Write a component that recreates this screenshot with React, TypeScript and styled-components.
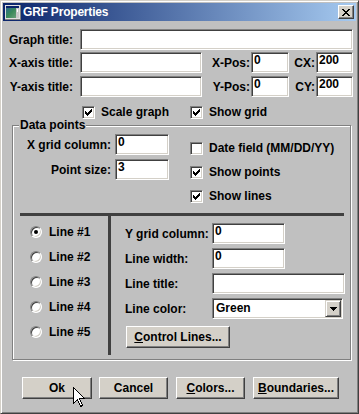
import React from 'react';
import styled, { createGlobalStyle } from 'styled-components';

const Global = createGlobalStyle`
  html, body { margin: 0; padding: 0; background: #c0c0c0; }
  body {
    font-family: "Liberation Sans", Arial, sans-serif;
    font-size: 12px;
    font-weight: bold;
    color: #000;
  }
`;

const Window = styled.div`
  position: relative;
  box-sizing: border-box;
  width: 359px;
  height: 414px;
  background: #c0c0c0;
  border: 1px solid;
  border-color: #d4d0c8 #404040 #404040 #d4d0c8;
  box-shadow: inset 1px 1px 0 #fff, inset -1px -1px 0 #808080;
  padding: 2px;
  display: flex;
  flex-direction: column;
`;

const TitleBar = styled.div`
  height: 18px;
  flex: none;
  display: flex;
  align-items: center;
  padding: 0 2px;
  background: linear-gradient(to right, #0a246a, #a6caf0);
`;

const TitleText = styled.span`
  margin-left: 2px;
  flex: 1;
  color: #fff;
  font-size: 12px;
  font-weight: bold;
  letter-spacing: -0.2px;
`;

const CloseButton = styled.div`
  box-sizing: border-box;
  width: 16px;
  height: 14px;
  background: #d4d0c8;
  border: 1px solid;
  border-color: #fff #404040 #404040 #fff;
  box-shadow: inset -1px -1px 0 #808080;
  display: flex;
  align-items: center;
  justify-content: center;
`;

const Body = styled.div`
  display: flex;
  flex-direction: column;
  padding-top: 8px;
`;

const Row = styled.div<{ $mt?: number }>`
  display: flex;
  align-items: center;
  height: 21px;
  margin-top: ${(p) => p.$mt ?? 0}px;
`;

const Label = styled.span<{ $w: number; $gap?: number; $align?: string }>`
  width: ${(p) => p.$w}px;
  flex: none;
  text-align: ${(p) => p.$align ?? 'right'};
  margin-right: ${(p) => p.$gap ?? 0}px;
  white-space: nowrap;
`;

const Field = styled.div<{ $w: number }>`
  box-sizing: border-box;
  width: ${(p) => p.$w}px;
  height: 21px;
  flex: none;
  background: #fff;
  border: 1px solid;
  border-color: #808080 #fff #fff #808080;
  box-shadow: inset 1px 1px 0 #404040, inset -1px -1px 0 #d4d0c8;
  padding: 1px 2px 0 2px;
  line-height: 13px;
  white-space: nowrap;
  overflow: hidden;
`;

const CheckRow = styled.div`
  display: grid;
  grid-template-columns: 108px auto;
  padding-left: 79px;
  margin-top: 8px;
  height: 13px;
`;

const CheckItem = styled.label<{ $h?: number }>`
  display: flex;
  align-items: center;
  gap: 6px;
  height: ${(p) => (p.$h ? `${p.$h}px` : 'auto')};
  white-space: nowrap;
`;

const Box = styled.span`
  box-sizing: border-box;
  width: 13px;
  height: 13px;
  flex: none;
  background: #fff;
  border: 1px solid;
  border-color: #808080 #fff #fff #808080;
  box-shadow: inset 1px 1px 0 #404040, inset -1px -1px 0 #d4d0c8;
  display: flex;
  align-items: center;
  justify-content: center;
`;

const Group = styled.fieldset`
  box-sizing: border-box;
  width: 339px;
  margin: 1px 0 0 9px;
  padding: 0 0 4px 0;
  min-width: 0;
  border: 1px solid #808080;
  box-shadow: inset 1px 1px 0 #fff, 1px 1px 0 #fff;
`;

const Legend = styled.legend`
  margin-left: 6px;
  padding: 0 1px;
  line-height: 13px;
  background: #c0c0c0;
`;

const TopSection = styled.div`
  display: flex;
  height: 76px;
`;

const LeftCol = styled.div`
  display: flex;
  flex-direction: column;
  gap: 4px;
  padding-top: 2px;
`;

const RightCol = styled.div`
  display: flex;
  flex-direction: column;
  margin-left: 21px;
  padding-top: 4px;
`;

const HRule = styled.div`
  height: 3px;
  background: #404040;
  margin: 5px 6px 0 7px;
`;

const BottomSection = styled.div`
  display: flex;
  height: 139px;
`;

const RadioCol = styled.div`
  width: 95px;
  box-sizing: border-box;
  padding: 4px 0 0 17px;
  display: flex;
  flex-direction: column;
`;

const RadioItem = styled.label`
  display: flex;
  align-items: center;
  gap: 7px;
  height: 24.8px;
`;

const RadioDot = styled.span<{ $on?: boolean }>`
  box-sizing: border-box;
  width: 12px;
  height: 12px;
  border-radius: 50%;
  background: #fff;
  border: 1px solid;
  border-color: #808080 #fff #fff #808080;
  box-shadow: inset 1px 1px 0 #404040, inset -1px -1px 0 #d4d0c8;
  display: flex;
  align-items: center;
  justify-content: center;
  &::after {
    content: '';
    width: 4px;
    height: 4px;
    border-radius: 50%;
    background: ${(p) => (p.$on ? '#000' : 'transparent')};
  }
`;

const VRule = styled.div`
  width: 3px;
  background: #404040;
  flex: none;
`;

const LineCol = styled.div`
  display: flex;
  flex-direction: column;
  gap: 4px;
  padding: 7px 0 0 14px;
`;

const Select = styled(Field)`
  display: flex;
  align-items: stretch;
  padding: 0 0 0 3px;
  line-height: 17px;
`;

const SelectText = styled.span`
  flex: 1;
  padding-top: 1px;
`;

const DropButton = styled.span`
  box-sizing: border-box;
  width: 16px;
  height: 17px;
  margin: 1px 1px 0 0;
  background: #d4d0c8;
  border: 1px solid;
  border-color: #d4d0c8 #404040 #404040 #d4d0c8;
  box-shadow: inset 1px 1px 0 #fff, inset -1px -1px 0 #808080;
  display: flex;
  align-items: center;
  justify-content: center;
`;

const Button = styled.button<{ $w: number }>`
  box-sizing: border-box;
  width: ${(p) => p.$w}px;
  height: 22px;
  flex: none;
  padding: 0;
  font: inherit;
  color: #000;
  background: #d4d0c8;
  border: 1px solid;
  border-color: #fff #404040 #404040 #fff;
  box-shadow: inset -1px -1px 0 #808080;
`;

const ControlButton = styled(Button)`
  margin: 3px 0 0 1px;
`;

const ButtonRow = styled.div`
  display: flex;
  gap: 7px;
  margin: 17px 0 0 19px;
  & > button + button + button { margin-left: 1px; }
`;

const Cursor = styled.svg`
  position: absolute;
  left: 72px;
  top: 386px;
`;

const Check = () => (
  <svg width="7" height="7" viewBox="0 0 7 7" shapeRendering="crispEdges">
    <path
      fill="#000"
      d="M6 0h1v1h-1z M5 1h2v1h-2z M0 2h1v1h-1z M4 2h3v1h-3z M0 3h2v1h-2z M3 3h3v1h-3z M0 4h5v1h-5z M1 5h3v1h-3z M2 6h1v1h-1z"
    />
  </svg>
);

const CheckBox = ({ on, label, h }: { on?: boolean; label: string; h?: number }) => (
  <CheckItem $h={h}>
    <Box>{on && <Check />}</Box>
    {label}
  </CheckItem>
);

const Radio = ({ on, label }: { on?: boolean; label: string }) => (
  <RadioItem>
    <RadioDot $on={on} />
    {label}
  </RadioItem>
);

const AppIcon = () => (
  <svg width="16" height="15" viewBox="0 0 16 15" shapeRendering="crispEdges">
    <defs>
      <linearGradient id="ig" x1="0" y1="0" x2="1" y2="1">
        <stop offset="0" stopColor="#2a6a8a" />
        <stop offset="0.5" stopColor="#3a8a5a" />
        <stop offset="1" stopColor="#6aa07a" />
      </linearGradient>
    </defs>
    <rect x="0" y="0" width="16" height="15" fill="#808080" />
    <rect x="0" y="0" width="15" height="14" fill="#e0e0e0" />
    <rect x="1" y="1" width="13" height="2" fill="#0a246a" />
    <rect x="1" y="3" width="10" height="10" fill="url(#ig)" />
    <rect x="11" y="3" width="3" height="10" fill="#c8c8c8" />
    <rect x="12" y="4" width="1" height="3" fill="#fff" />
  </svg>
);

export default function App() {
  return (
    <>
      <Global />
      <Window>
        <TitleBar>
          <AppIcon />
          <TitleText>GRF Properties</TitleText>
          <CloseButton>
            <svg width="8" height="7" viewBox="0 0 8 7" shapeRendering="crispEdges">
              <path
                fill="#000"
                d="M0 0h2v1h-2z M6 0h2v1h-2z M1 1h2v1h-2z M5 1h2v1h-2z M2 2h4v1h-4z M3 3h2v1h-2z M2 4h4v1h-4z M1 5h2v1h-2z M5 5h2v1h-2z M0 6h2v1h-2z M6 6h2v1h-2z"
              />
            </svg>
          </CloseButton>
        </TitleBar>
        <Body>
          <Row>
            <Label $w={70} $gap={7}>Graph title:</Label>
            <Field $w={273} />
          </Row>
          <Row $mt={2}>
            <Label $w={70} $gap={7}>X-axis title:</Label>
            <Field $w={122} />
            <Label $w={48} $gap={1}>X-Pos:</Label>
            <Field $w={38}>0</Field>
            <Label $w={26} $gap={1}>CX:</Label>
            <Field $w={37}>200</Field>
          </Row>
          <Row $mt={3}>
            <Label $w={70} $gap={7}>Y-axis title:</Label>
            <Field $w={122} />
            <Label $w={48} $gap={1}>Y-Pos:</Label>
            <Field $w={38}>0</Field>
            <Label $w={26} $gap={1}>CY:</Label>
            <Field $w={37}>200</Field>
          </Row>
          <CheckRow>
            <CheckBox on label="Scale graph" />
            <CheckBox on label="Show grid" />
          </CheckRow>
          <Group>
            <Legend>Data points</Legend>
            <TopSection>
              <LeftCol>
                <Row>
                  <Label $w={98} $gap={4}>X grid column:</Label>
                  <Field $w={54}>0</Field>
                </Row>
                <Row>
                  <Label $w={98} $gap={4}>Point size:</Label>
                  <Field $w={54}>3</Field>
                </Row>
              </LeftCol>
              <RightCol>
                <CheckBox label="Date field (MM/DD/YY)" h={24} />
                <CheckBox on label="Show points" h={24} />
                <CheckBox on label="Show lines" h={24} />
              </RightCol>
            </TopSection>
            <HRule />
            <BottomSection>
              <RadioCol>
                <Radio on label="Line #1" />
                <Radio label="Line #2" />
                <Radio label="Line #3" />
                <Radio label="Line #4" />
                <Radio label="Line #5" />
              </RadioCol>
              <VRule />
              <LineCol>
                <Row>
                  <Label $w={87} $align="left">Y grid column:</Label>
                  <Field $w={73}>0</Field>
                </Row>
                <Row>
                  <Label $w={87} $align="left">Line width:</Label>
                  <Field $w={73}>0</Field>
                </Row>
                <Row>
                  <Label $w={87} $align="left">Line title:</Label>
                  <Field $w={133} />
                </Row>
                <Row>
                  <Label $w={87} $align="left">Line color:</Label>
                  <Select $w={131}>
                    <SelectText>Green</SelectText>
                    <DropButton>
                      <svg width="7" height="4" viewBox="0 0 7 4" shapeRendering="crispEdges">
                        <path fill="#000" d="M0 0h7v1h-7z M1 1h5v1h-5z M2 2h3v1h-3z M3 3h1v1h-1z" />
                      </svg>
                    </DropButton>
                  </Select>
                </Row>
                <ControlButton $w={104}>
                  <u>C</u>ontrol Lines...
                </ControlButton>
              </LineCol>
            </BottomSection>
          </Group>
          <ButtonRow>
            <Button $w={70}>Ok</Button>
            <Button $w={69}>Cancel</Button>
            <Button $w={69}>
              <u>C</u>olors...
            </Button>
            <Button $w={86}>
              <u>B</u>oundaries...
            </Button>
          </ButtonRow>
        </Body>
        <Cursor width="13" height="21" viewBox="0 0 13 21" shapeRendering="crispEdges">
          <path
            d="M0.5 0.5 L0.5 16.5 L4.5 12.5 L7.5 19.5 L9.5 18.5 L6.5 11.5 L11.5 11.5 Z"
            fill="#fff"
            stroke="#000"
            strokeWidth="1"
          />
        </Cursor>
      </Window>
    </>
  );
}
